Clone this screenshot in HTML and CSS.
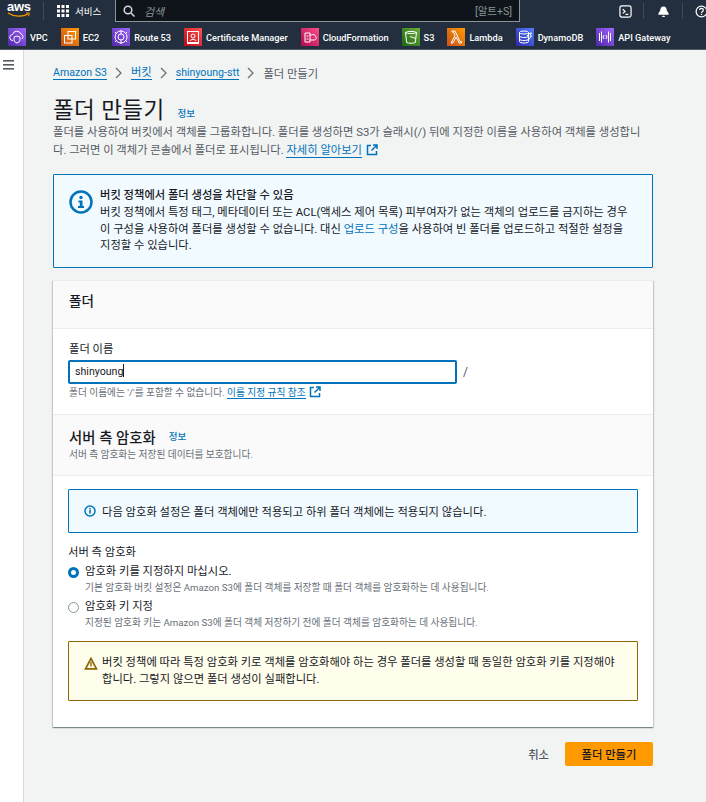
FILE: index.html
```html
<!DOCTYPE html>
<html lang="ko">
<head>
<meta charset="utf-8">
<title>폴더 만들기</title>
<link rel="stylesheet" href="styles.css">
</head>
<body>
<header class="topnav">
  <div class="toprow">
    <div class="logo">
      <span class="logo-text">aws</span>
      <svg class="logo-smile" width="24" height="6" viewBox="0 0 24 6"><path d="M1 1c6 4 15 4 20 1" fill="none" stroke="#f90" stroke-width="1.2"/><path d="M19 1l3.500 .2-1 3" fill="none" stroke="#f90" stroke-width="1"/></svg>
    </div>
    <div class="services">
      <svg width="12" height="12" viewBox="0 0 12 12" fill="#fff"><rect width="3" height="3"/><rect x="4.500" width="3" height="3"/><rect x="9" width="3" height="3"/><rect y="4.500" width="3" height="3"/><rect x="4.500" y="4.500" width="3" height="3"/><rect x="9" y="4.500" width="3" height="3"/><rect y="9" width="3" height="3"/><rect x="4.500" y="9" width="3" height="3"/><rect x="9" y="9" width="3" height="3"/></svg>
      <span>서비스</span>
    </div>
    <div class="search">
      <svg width="12" height="12" viewBox="0 0 12 12" fill="none" stroke="#d5dbdb" stroke-width="1.500"><circle cx="5" cy="5" r="3.800"/><path d="M8 8l3.500 3.500"/></svg>
      <span class="search-ph">검색</span>
      <span class="search-key">[알트+S]</span>
    </div>
    <div class="top-icons">
      <svg class="ti-shell" width="13" height="13" viewBox="0 0 14 14" fill="none" stroke="#fff" stroke-width="1.300"><rect x="1" y="1" width="12" height="12" rx="2"/><path d="M4 4.500l2.500 2.500L4 9M7 10h3"/></svg>
      <i class="sep"></i>
      <svg class="ti-bell" width="13" height="13" viewBox="0 0 14 14" fill="#fff"><path d="M7 1.500c2.500 0 3.500 2 3.500 4.500l2 3v1.500h-11V9l2-3C3.500 3.500 4.500 1.500 7 1.500z"/><rect x="5.500" y="11.500" width="3" height="1.500" rx=".7"/></svg>
      <i class="sep"></i>
      <svg class="ti-help" width="13" height="13" viewBox="0 0 14 14" fill="none" stroke="#fff" stroke-width="1.300"><circle cx="7" cy="7" r="5.800"/><path d="M5 5.500c0-2.500 4-2.500 4 0 0 1.500-2 1.500-2 3.200M7 9.500v1.300"/></svg>
    </div>
  </div>
  <nav class="favs">
    <a class="fav"><span class="tile t-purple"><svg viewBox="0 0 18 18" fill="none" stroke="#fff" stroke-width="1"><path d="M5 12.500a3 3 0 0 1-.5-6 4.500 4.500 0 0 1 8.500-.5 3 3 0 0 1 1 5"/><path d="M9 8l3 1.200V12c0 1.500-1.500 2.500-3 3-1.500-.5-3-1.500-3-3V9.200z"/></svg></span>VPC</a>
    <a class="fav"><span class="tile t-orange"><svg viewBox="0 0 18 18" fill="none" stroke="#fff" stroke-width="1"><rect x="7" y="3.500" width="7.500" height="7.500"/><rect x="3.500" y="7.500" width="7.500" height="7.500"/></svg></span>EC2</a>
    <a class="fav"><span class="tile t-violet"><svg viewBox="0 0 18 18" fill="none" stroke="#fff" stroke-width="1"><circle cx="9" cy="9" r="6"/><circle cx="9" cy="9" r="3"/><path d="M3 4l2 2M15 4l-2 2M3 14l2-2M15 14l-2-2M9 2v4M9 12v4"/></svg></span>Route 53</a>
    <a class="fav"><span class="tile t-red"><svg viewBox="0 0 18 18" fill="none" stroke="#fff" stroke-width="1"><rect x="3.500" y="3.500" width="11" height="11"/><circle cx="9" cy="8" r="2"/><path d="M6 13c0-2 6-2 6 0M3 15.500h12"/></svg></span>Certificate Manager</a>
    <a class="fav"><span class="tile t-pink"><svg viewBox="0 0 18 18" fill="none" stroke="#fff" stroke-width="1"><path d="M4 14V5h5v9zM9 7h1.500a2.500 2.500 0 0 1 4 1.500 2 2 0 0 1-1 3.500H9M5.500 8h2M5.500 11h2"/></svg></span>CloudFormation</a>
    <a class="fav"><span class="tile t-green"><svg viewBox="0 0 18 18" fill="none" stroke="#fff" stroke-width="1"><path d="M3.500 4.500c2-1.500 9-1.500 11 0l-1.200 10c-1.500 1-7 1-8.600 0zM3.500 4.500c2 1.500 9 1.500 11 0M8 8.500l6 2"/></svg></span>S3</a>
    <a class="fav"><span class="tile t-orange"><svg viewBox="0 0 18 18" fill="none" stroke="#fff" stroke-width="1"><path d="M4 15l4-7.500L6.500 4H5V3h3l5 10.500h1.500V15h-2.300L9 9l-3 6z"/></svg></span>Lambda</a>
    <a class="fav"><span class="tile t-blue"><svg viewBox="0 0 18 18" fill="none" stroke="#fff" stroke-width="1"><ellipse cx="8" cy="4.500" rx="4.500" ry="1.500"/><path d="M3.500 4.500v9c0 2 9 2 9 0v-9M3.500 8c0 2 9 2 9 0M3.500 11c0 2 9 2 9 0M11 8l3-3h1.500l-1.500 3h1.500L12 12.500"/></svg></span>DynamoDB</a>
    <a class="fav"><span class="tile t-indigo"><svg viewBox="0 0 18 18" fill="none" stroke="#fff" stroke-width="1"><path d="M3.500 5v8M5.500 3.500v11M12.500 3.500v11M14.500 5v8M8 7L7 9l1 2M10 7l1 2-1 2"/></svg></span>API Gateway</a>
  </nav>
</header>
<div class="shell">
  <aside class="rail">
    <svg width="11" height="10" viewBox="0 0 11 10" fill="#545b64"><rect width="11" height="1.600"/><rect y="4" width="11" height="1.600"/><rect y="8" width="11" height="1.600"/></svg>
  </aside>
  <main class="content">
    <div class="crumbs">
      <a class="en">Amazon S3</a><svg class="chev" width="8" height="12" viewBox="0 0 8 12" fill="none" stroke="#687078" stroke-width="1.300"><path d="M1 1l5 5-5 5"/></svg>
      <a>버킷</a><svg class="chev" width="8" height="12" viewBox="0 0 8 12" fill="none" stroke="#687078" stroke-width="1.300"><path d="M1 1l5 5-5 5"/></svg>
      <a class="en">shinyoung-stt</a><svg class="chev" width="8" height="12" viewBox="0 0 8 12" fill="none" stroke="#687078" stroke-width="1.300"><path d="M1 1l5 5-5 5"/></svg>
      <span>폴더 만들기</span>
    </div>
    <div class="title-row"><h1>폴더 만들기</h1><a class="info info-h1">정보</a></div>
    <p class="desc">폴더를 사용하여 버킷에서 객체를 그룹화합니다. 폴더를 생성하면 S3가 슬래시(/) 뒤에 지정한 이름을 사용하여 객체를 생성합니다. 그러면 이 객체가 콘솔에서 폴더로 표시됩니다. <a class="ul">자세히 알아보기</a> <svg class="ext" width="12" height="12" viewBox="0 0 12 12" fill="none" stroke="#0073bb" stroke-width="1.500"><path d="M5 1.500H1.500v9h9V7M7 1h4v4M11 1L5.500 6.500"/></svg></p>

    <section class="flash flash-lg">
      <svg class="flash-ic-lg" width="24" height="24" viewBox="0 0 24 24"><circle cx="12" cy="12" r="10.500" fill="none" stroke="#0073bb" stroke-width="2.500"/><circle cx="12" cy="7.500" r="1.700" fill="#0073bb"/><path d="M9.500 10.500H13.500V16H15V18H9V16H10.800V12.500H9.500z" fill="#0073bb"/></svg>
      <div>
        <div class="flash-title">버킷 정책에서 폴더 생성을 차단할 수 있음</div>
        <div class="flash-body">버킷 정책에서 특정 태그, 메타데이터 또는 ACL(액세스 제어 목록) 피부여자가 없는 객체의 업로드를 금지하는 경우 이 구성을 사용하여 폴더를 생성할 수 없습니다. 대신 <a class="plain">업로드 구성</a>을 사용하여 빈 폴더를 업로드하고 적절한 설정을 지정할 수 있습니다.</div>
      </div>
    </section>

    <section class="card">
      <h2 class="card-head">폴더</h2>
      <div class="field">
        <label class="lbl">폴더 이름</label>
        <div class="input-row">
          <div class="input"><span class="en">shinyoung</span><i class="caret"></i></div>
          <span class="slash">/</span>
        </div>
        <div class="hint">폴더 이름에는 '/'를 포함할 수 없습니다. <a class="ul">이름 지정 규칙 참조</a> <svg class="ext" width="12" height="12" viewBox="0 0 12 12" fill="none" stroke="#0073bb" stroke-width="1.500"><path d="M5 1.500H1.500v9h9V7M7 1h4v4M11 1L5.500 6.500"/></svg></div>
      </div>
      <div class="sec-head">
        <div class="sec-title"><h2>서버 측 암호화</h2><a class="info">정보</a></div>
        <p class="hint">서버 측 암호화는 저장된 데이터를 보호합니다.</p>
      </div>
      <div class="sec-body">
        <div class="flash flash-sm">
          <svg width="12" height="12" viewBox="0 0 12 12"><circle cx="6" cy="6" r="5" fill="none" stroke="#0073bb" stroke-width="1.500"/><rect x="5.200" y="5" width="1.600" height="3.500" fill="#0073bb"/><rect x="5.200" y="3" width="1.600" height="1.400" fill="#0073bb"/></svg>
          <span>다음 암호화 설정은 폴더 객체에만 적용되고 하위 폴더 객체에는 적용되지 않습니다.</span>
        </div>
        <div class="lbl lbl-radio">서버 측 암호화</div>
        <div class="radio">
          <i class="dot on"></i>
          <div><div class="r-title">암호화 키를 지정하지 마십시오.</div><div class="hint">기본 암호화 버킷 설정은 Amazon S3에 폴더 객체를 저장할 때 폴더 객체를 암호화하는 데 사용됩니다.</div></div>
        </div>
        <div class="radio">
          <i class="dot"></i>
          <div><div class="r-title">암호화 키 지정</div><div class="hint">지정된 암호화 키는 Amazon S3에 폴더 객체 저장하기 전에 폴더 객체를 암호화하는 데 사용됩니다.</div></div>
        </div>
        <div class="flash flash-warn">
          <svg width="14" height="13" viewBox="0 0 14 13"><path d="M7 1.500L1.500 11.800h11z" fill="none" stroke="#8d6605" stroke-width="1.700"/><path d="M6.300 5h1.400v4.500H6.300z" fill="#8d6605"/></svg>
          <span>버킷 정책에 따라 특정 암호화 키로 객체를 암호화해야 하는 경우 폴더를 생성할 때 동일한 암호화 키를 지정해야 합니다. 그렇지 않으면 폴더 생성이 실패합니다.</span>
        </div>
      </div>
    </section>

    <div class="actions">
      <a class="cancel">취소</a>
      <button class="primary" type="button">폴더 만들기</button>
    </div>
  </main>
</div>
</body>
</html>
```

FILE: styles.css
```css
* { box-sizing: border-box; }
html, body { margin: 0; height: 100%; overflow: hidden; }
body {
  font-family: "Roboto", "Noto Sans CJK KR", sans-serif;
  font-size: 11.300px;
  color: #16191f;
  background: #f2f3f3;
}
a { color: #0073bb; }
h1, h2, p { margin: 0; font-weight: 400; }
.en { font-size: 10.600px; }

.topnav { height: 50px; background: #232f3e; border-bottom: 1px solid #545b64; color: #fff; }
.toprow { height: 22px; display: flex; align-items: stretch; }
.logo { width: 43px; flex: none; padding-left: 7px; }
.logo-text { display: block; font: 700 13px/13px "Liberation Sans", sans-serif; color: #fff; letter-spacing: -.3px; }
.logo-smile { display: block; margin-top: -1px; }
.services { width: 72px; flex: none; display: flex; align-items: center; gap: 6px; padding-left: 13px; font-size: 9.500px; border-left: 1px solid #3f4b5b; margin: 2px 0; }
.search { width: 405px; flex: none; height: 22px; background: #0f141a; border: 1px solid #879596; border-top: 0; display: flex; align-items: center; padding: 0 7px; color: #d5dbdb; }
.search-ph { margin-left: 9px; font-style: italic; color: #879596; font-size: 11px; }
.search-key { margin-left: auto; color: #879596; font-size: 10.500px; }
.top-icons { flex: none; display: flex; align-items: center; padding-left: 99px; }
.top-icons svg { flex: none; }
.sep { width: 1px; height: 16px; flex: none; background: #3f4b5b; margin: 0 13px 0 11px; }
.ti-bell + .sep { margin: 0 12px; }

.favs { height: 27px; display: flex; align-items: flex-start; padding: 6px 0 0 8px; gap: 13px; font-size: 9.200px; font-weight: 500; }
.fav { display: flex; align-items: center; gap: 4px; color: #fff; white-space: nowrap; }
.tile { width: 18px; height: 18px; flex: none; display: block; }
.tile svg { display: block; width: 18px; height: 18px; }
.t-purple { background: linear-gradient(45deg, #4d27a8, #a166ff); }
.t-orange { background: linear-gradient(45deg, #c8511b, #f90); }
.t-violet { background: linear-gradient(45deg, #4d27a8, #a166ff); }
.t-red { background: linear-gradient(45deg, #bd0816, #ff5252); }
.t-pink { background: linear-gradient(45deg, #b0084d, #ff4f8b); }
.t-green { background: linear-gradient(45deg, #1b660f, #6cae3e); }
.t-blue { background: linear-gradient(45deg, #2e27ad, #527fff); }
.t-indigo { background: linear-gradient(45deg, #4d27a8, #a166ff); }

.shell { display: flex; height: 752px; }
.rail { width: 24px; flex: none; background: #fff; border-right: 1px solid #d5dbdb; padding: 10px 0 0 3px; }
.rail svg { display: block; }
.content { width: 629px; margin-left: 29px; flex: none; }

.crumbs { display: flex; align-items: center; height: 16px; margin-top: 15px; color: #545b64; }
.crumbs a { border-bottom: 1px solid #0073bb; line-height: 13px; }
.chev { margin: 0 8px; }

.title-row { display: flex; align-items: center; height: 26px; margin-top: 16px; }
h1 { font-size: 22.500px; line-height: 26px; letter-spacing: .4px; }
.info { font-size: 9.500px; font-weight: 500; }
.info-h1 { margin-left: 13px; margin-top: 5px; }
.desc { margin-top: 1px; width: 600px; line-height: 18px; color: #545b64; }
.ul { border-bottom: 1px solid #0073bb; }
.ext { vertical-align: -2px; margin-left: 1px; }

.flash { border: 1px solid #0073bb; background: #f1faff; border-radius: 1px; }
.flash-lg { width: 600px; height: 94px; margin-top: 14px; padding: 13px 21px 13px 15px; display: flex; gap: 7px; }
.flash-ic-lg { flex: none; margin-top: 2px; }
.flash-title { font-weight: 500; line-height: 15px; margin-bottom: 2px; }
.flash-body { line-height: 16.500px; }
.plain { color: #0073bb; }

.card { width: 600px; height: 447px; margin-top: 12px; background: #fff; border-top: 1px solid #eaeded; box-shadow: 0 1px 1px 0 rgba(0,28,36,.3), 1px 1px 1px 0 rgba(0,28,36,.15), -1px 1px 1px 0 rgba(0,28,36,.15); }
.card-head { height: 48px; padding: 0 16px; font-size: 13.500px; font-weight: 500; line-height: 40px; background: #fafafa; border-bottom: 1px solid #eaeded; }
.field { padding: 14px 15px 0 16px; height: 85px; }
.lbl { display: block; line-height: 14px; }
.input-row { display: flex; align-items: center; margin-top: 3px; margin-left: -1px; }
.input { width: 389px; height: 24px; border: 2px solid #0073bb; border-radius: 2px; padding: 0 5px; line-height: 20px; background: #fff; color: #16191f; }
.caret { display: inline-block; width: 1px; height: 13px; background: #16191f; vertical-align: -2px; }
.slash { margin-left: 6px; color: #545b64; font-size: 12px; }
.hint { color: #687078; font-size: 9.700px; line-height: 14px; }
.field .hint { margin-top: 2px; }
.sec-head { height: 62px; padding: 12px 16px 0; background: #fafafa; border-top: 1px solid #eaeded; border-bottom: 1px solid #eaeded; }
.sec-title { display: flex; align-items: center; gap: 13px; height: 18px; }
.sec-title h2 { font-size: 14.300px; font-weight: 500; letter-spacing: .1px; }
.sec-head .hint { margin-top: 3px; }
.sec-body { padding: 13px 15px 0; }
.flash-sm { height: 44px; display: flex; align-items: center; gap: 6px; padding: 0 15px; }
.lbl-radio { margin-top: 13px; }
.radio { display: flex; gap: 6px; margin-top: 5px; }
.radio + .radio { margin-top: 5px; }
.radio .hint { margin-top: 2px; }
.dot { width: 11px; height: 11px; margin: 2px 0 0 0; flex: none; border-radius: 50%; border: 1px solid #879596; background: #fff; }
.dot.on { border: 3.500px solid #0073bb; }
.r-title { line-height: 14px; }
.flash-warn { border-color: #8d6605; background: #fffdeb; height: 60px; margin-top: 11px; padding: 12px 15px; display: flex; gap: 4px; line-height: 17px; }
.flash-warn svg { flex: none; margin-top: 3px; }

.actions { width: 600px; display: flex; justify-content: flex-end; align-items: center; margin-top: 15px; gap: 16px; }
.cancel { color: #545b64; font-weight: 500; }
.primary { width: 88px; height: 24px; border: 0; border-radius: 2px; background: #ff9900; color: #16191f; font: inherit; font-weight: 500; padding: 0; }
```
